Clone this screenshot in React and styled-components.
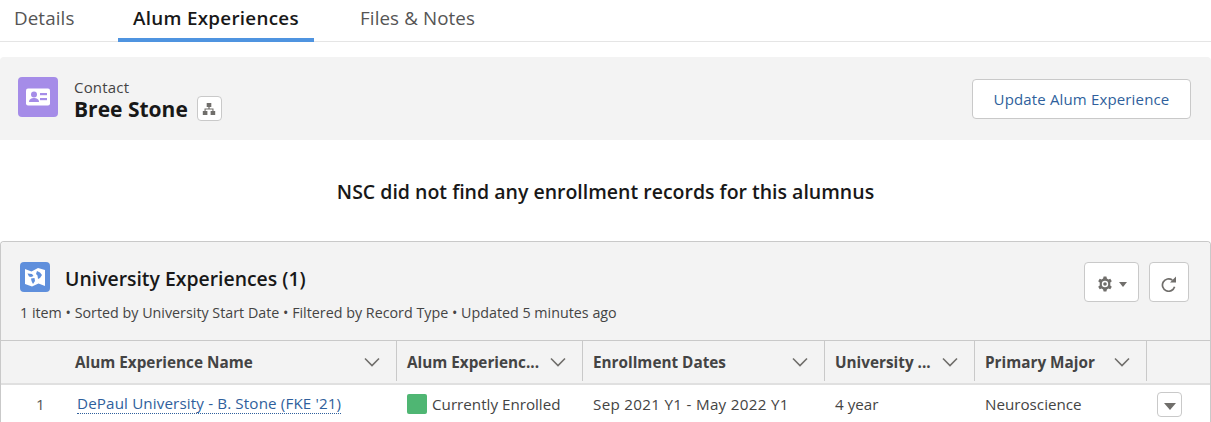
import React from 'react';
import styled, { createGlobalStyle } from 'styled-components';

const GlobalStyle = createGlobalStyle`
  html, body {
    margin: 0;
    padding: 0;
    background: #fff;
    font-family: 'Open Sans', 'Noto Sans', Arial, sans-serif;
    color: #181818;
  }
`;

const Page = styled.div`
  width: 1211px;
  height: 422px;
  overflow: hidden;
`;

const TabBar = styled.div`
  display: flex;
  height: 42px;
  box-sizing: border-box;
  border-bottom: 1px solid #e5e5e5;
`;

const Tab = styled.div`
  box-sizing: border-box;
  width: ${(p) => p.$width}px;
  height: 42px;
  padding-left: ${(p) => p.$pad}px;
  line-height: 36px;
  font-size: 18.8px;
  letter-spacing: ${(p) => (p.$active ? '0.3px' : '0.1px')};
  white-space: nowrap;
  color: ${(p) => (p.$active ? '#181818' : '#555')};
  font-weight: ${(p) => (p.$active ? 600 : 400)};
  border-bottom: ${(p) => (p.$active ? '4px solid #4f94e0' : 'none')};
`;

const RecordHeader = styled.div`
  margin-top: 15px;
  height: 83px;
  box-sizing: border-box;
  padding: 20px 20px 0 18px;
  background: #f3f3f3;
  border-radius: 4px 4px 0 0;
  display: flex;
  justify-content: space-between;
  align-items: flex-start;
`;

const HeaderLeft = styled.div`
  display: flex;
  gap: 16px;
`;

const IconTile = styled.div`
  width: ${(p) => p.$size}px;
  height: ${(p) => p.$size}px;
  border-radius: 4px;
  background: ${(p) => p.$color};
  flex: none;
  display: flex;
  align-items: center;
  justify-content: center;
`;

const Crumb = styled.div`
  font-size: 15px;
  line-height: 18px;
  padding-top: 1px;
  color: #444;
  letter-spacing: 0.2px;
`;

const NameRow = styled.div`
  display: flex;
  align-items: center;
  gap: 9px;
`;

const RecordName = styled.div`
  font-size: 21px;
  line-height: 24px;
  font-weight: 700;
`;

const IconButton = styled.div`
  box-sizing: border-box;
  width: ${(p) => p.$w}px;
  height: ${(p) => p.$h}px;
  padding-top: ${(p) => p.$top ?? 0}px;
  background: #fff;
  border: 1px solid #c9c9c9;
  border-radius: 4px;
  display: flex;
  align-items: center;
  justify-content: center;
  gap: 6px;
  flex: none;
`;

const ActionButton = styled.div`
  box-sizing: border-box;
  width: 219px;
  height: 40px;
  margin-top: 2px;
  background: #fff;
  border: 1px solid #c9c9c9;
  border-radius: 4px;
  color: #2f5f9c;
  font-size: 15px;
  letter-spacing: 0.15px;
  line-height: 38px;
  text-align: center;
`;

const Notice = styled.div`
  height: 101px;
  box-sizing: border-box;
  padding-top: 38px;
  text-align: center;
  font-size: 19.5px;
  line-height: 28px;
  font-weight: 600;
`;

const ListCard = styled.div`
  box-sizing: border-box;
  height: 300px;
  border: 1px solid #c9c9c9;
  border-bottom: none;
  border-radius: 4px 4px 0 0;
`;

const ListHead = styled.div`
  height: 99px;
  box-sizing: border-box;
  padding: 20px 21px 0 19px;
  background: #f3f3f3;
  border-bottom: 1px solid #c9c9c9;
  border-radius: 4px 4px 0 0;
  display: flex;
  justify-content: space-between;
  align-items: flex-start;
`;

const TitleRow = styled.div`
  display: flex;
  align-items: center;
  gap: 15px;
  height: 30px;
`;

const ListTitle = styled.div`
  font-size: 19.4px;
  font-weight: 600;
  padding-top: 3px;
`;

const ListMeta = styled.div`
  margin-top: 11px;
  font-size: 14.3px;
  line-height: 20px;
  color: #444;
  white-space: nowrap;
`;

const ListActions = styled.div`
  display: flex;
  gap: 10px;
`;

const Row = styled.div`
  display: grid;
  grid-template-columns: 64px 332px 186px 242px 150px 172px 1fr;
`;

const HeadRow = styled(Row)`
  height: 42px;
  background: #f3f3f3;
  border-bottom: 2px solid #e0e0e0;
`;

const HeadCell = styled.div`
  box-sizing: border-box;
  height: 40px;
  padding: 2px 16px 0 10px;
  display: flex;
  align-items: center;
  justify-content: space-between;
  font-size: 15.3px;
  font-weight: 700;
  color: #444;
  white-space: nowrap;
  border-right: ${(p) => (p.$noDivider ? 'none' : '1px solid #c9c9c9')};
`;

const BodyRow = styled(Row)`
  height: 38px;
  align-items: center;
  font-size: 15.2px;
  color: #444;
`;

const BodyCell = styled.div`
  padding-left: ${(p) => p.$pad ?? 10}px;
  letter-spacing: ${(p) => p.$ls ?? 0}px;
  white-space: nowrap;
  display: flex;
  align-items: center;
  gap: 5px;
`;

const RowNumber = styled.div`
  padding-left: 35px;
  color: #555;
`;

const RecordLink = styled.span`
  color: #2f5f9c;
  border-bottom: 1px dotted #2f5f9c;
  line-height: 19px;
`;

const StatusSwatch = styled.span`
  width: 20px;
  height: 20px;
  border-radius: 2px;
  background: #4fb673;
  flex: none;
`;

const RowMenu = styled(IconButton)`
  margin-left: 10px;
`;

const columns = [
  { label: '', noIcon: true, noDivider: true },
  { label: 'Alum Experience Name' },
  { label: 'Alum Experienc...' },
  { label: 'Enrollment Dates' },
  { label: 'University ...' },
  { label: 'Primary Major' },
  { label: '', noIcon: true, noDivider: true },
];

const Chevron = () => (
  <svg width="16" height="16" viewBox="0 0 16 16" fill="none" stroke="#706e6b" strokeWidth="1.6">
    <path d="M1 4.5 L8 11.5 L15 4.5" />
  </svg>
);

const ContactIcon = () => (
  <svg width="24" height="18" viewBox="0 0 24 18">
    <rect x="0" y="0.5" width="24" height="17" rx="2" fill="#fff" />
    <circle cx="8" cy="6.5" r="3" fill="#a58ce8" />
    <path d="M3 14 C3 11 5.5 10 8 10 C10.5 10 13 11 13 14 Z" fill="#a58ce8" />
    <rect x="14" y="5" width="7" height="2.2" fill="#a58ce8" />
    <rect x="14" y="10" width="7" height="2.2" fill="#a58ce8" />
  </svg>
);

const MapIcon = () => (
  <svg width="22" height="22" viewBox="0 0 22 22">
    <path d="M1 3 L7.5 5.5 L14 2 L21 4 L21 20 L14.5 17.5 L8 20.5 L1 18 Z" fill="#fff" />
    <path d="M3.5 7.5 L8 8 L9.5 10 L7 11 L5 10.5 Z M7 12.5 L10.5 12 L11 15 L9 18 L7.5 15 Z" fill="#5f8fdc" />
    <path d="M13 5 L16 6.5 L18 9 L16 12 L14 13 L13.5 9.5 L12 8 Z" fill="#5f8fdc" />
  </svg>
);

const HierarchyIcon = () => (
  <svg width="14" height="14" viewBox="0 0 14 14" fill="#706e6b">
    <rect x="4.7" y="1" width="4.6" height="4" />
    <rect x="0.8" y="9" width="4.6" height="4" />
    <rect x="8.6" y="9" width="4.6" height="4" />
    <path d="M6.4 5 H7.6 V6.5 H11.5 V9 H10.4 V7.6 H3.6 V9 H2.5 V6.5 H6.4 Z" />
  </svg>
);

const GearIcon = () => (
  <svg width="16" height="16" viewBox="0 0 16 16">
    <path
      fill="#706e6b"
      fillRule="evenodd"
      d="M6.6 0.6 H9.4 L9.9 2.6 L11.4 3.4 L13.3 2.7 L14.8 5.2 L13.3 6.6 V9.4 L14.8 10.8 L13.3 13.3 L11.4 12.6 L9.9 13.4 L9.4 15.4 H6.6 L6.1 13.4 L4.6 12.6 L2.7 13.3 L1.2 10.8 L2.7 9.4 V6.6 L1.2 5.2 L2.7 2.7 L4.6 3.4 L6.1 2.6 Z M8 4.8 A3.2 3.2 0 1 0 8 11.2 A3.2 3.2 0 1 0 8 4.8 Z"
    />
    <circle cx="8" cy="8" r="1.8" fill="#706e6b" />
  </svg>
);

const CaretDown = ({ w = 8, h = 5 }) => (
  <svg width={w} height={h} viewBox="0 0 8 5" fill="#706e6b" preserveAspectRatio="none">
    <path d="M0 0 H8 L4 5 Z" />
  </svg>
);

const RefreshIcon = () => (
  <svg width="16" height="16" viewBox="0 0 16 16" fill="none">
    <path d="M11.3 4 A6.2 6.2 0 1 0 13.6 10.8" stroke="#706e6b" strokeWidth="1.7" />
    <path d="M15 0.5 V6.5 H9 Z" fill="#706e6b" />
  </svg>
);

const App = () => (
  <Page>
    <GlobalStyle />
    <TabBar>
      <Tab $width={118} $pad={14}>Details</Tab>
      <Tab $width={196} $pad={15} $active>Alum Experiences</Tab>
      <Tab $width={200} $pad={46}>Files &amp; Notes</Tab>
    </TabBar>

    <RecordHeader>
      <HeaderLeft>
        <IconTile $size={40} $color="#a58ce8">
          <ContactIcon />
        </IconTile>
        <div>
          <Crumb>Contact</Crumb>
          <NameRow>
            <RecordName>Bree Stone</RecordName>
            <IconButton $w={25} $h={25}>
              <HierarchyIcon />
            </IconButton>
          </NameRow>
        </div>
      </HeaderLeft>
      <ActionButton>Update Alum Experience</ActionButton>
    </RecordHeader>

    <Notice>NSC did not find any enrollment records for this alumnus</Notice>

    <ListCard>
      <ListHead>
        <div>
          <TitleRow>
            <IconTile $size={30} $color="#5f8fdc">
              <MapIcon />
            </IconTile>
            <ListTitle>University Experiences (1)</ListTitle>
          </TitleRow>
          <ListMeta>
            1 item • Sorted by University Start Date • Filtered by Record Type • Updated 5 minutes ago
          </ListMeta>
        </div>
        <ListActions>
          <IconButton $w={55} $h={40} $top={4}>
            <GearIcon />
            <CaretDown />
          </IconButton>
          <IconButton $w={40} $h={40} $top={4}>
            <RefreshIcon />
          </IconButton>
        </ListActions>
      </ListHead>

      <HeadRow>
        {columns.map((col, i) => (
          <HeadCell key={i} $noDivider={col.noDivider}>
            <span>{col.label}</span>
            {!col.noIcon && <Chevron />}
          </HeadCell>
        ))}
      </HeadRow>

      <BodyRow>
        <RowNumber>1</RowNumber>
        <BodyCell $pad={12} $ls={0.13}>
          <RecordLink>DePaul University - B. Stone (FKE '21)</RecordLink>
        </BodyCell>
        <BodyCell>
          <StatusSwatch />
          Currently Enrolled
        </BodyCell>
        <BodyCell $ls={0.3}>Sep 2021 Y1 - May 2022 Y1</BodyCell>
        <BodyCell>4 year</BodyCell>
        <BodyCell>Neuroscience</BodyCell>
        <BodyCell $pad={0}>
          <RowMenu $w={25} $h={25} $top={4}>
            <CaretDown w={12} h={7} />
          </RowMenu>
        </BodyCell>
      </BodyRow>
    </ListCard>
  </Page>
);

export default App;
